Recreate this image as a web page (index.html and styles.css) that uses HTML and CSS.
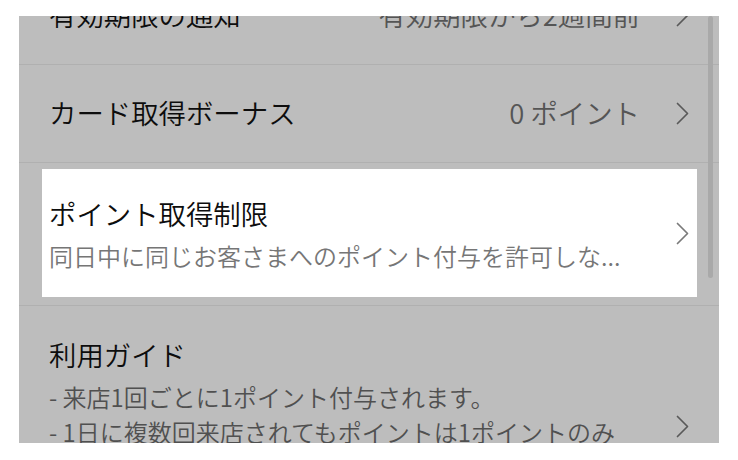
FILE: index.html
```html
<!DOCTYPE html>
<html lang="ja">
<head>
<meta charset="utf-8">
<link rel="stylesheet" href="styles.css">
</head>
<body>
<div class="screen">
  <div class="list">
    <div class="row">
      <div class="label">有効期限の通知</div>
      <div class="value">有効期限から2週間前</div>
      <svg class="chev" viewBox="0 0 13 23" width="13" height="23"><polyline points="1.5,1.5 11.5,11.5 1.5,21.5" /></svg>
    </div>
    <div class="row">
      <div class="label">カード取得ボーナス</div>
      <div class="value">0 ポイント</div>
      <svg class="chev" viewBox="0 0 13 23" width="13" height="23"><polyline points="1.5,1.5 11.5,11.5 1.5,21.5" /></svg>
    </div>
    <div class="row row-spot">
      <div class="spot">
        <div class="text">
          <div class="title">ポイント取得制限</div>
          <div class="sub">同日中に同じお客さまへのポイント付与を許可しな...</div>
        </div>
        <svg class="chev chev-light" viewBox="0 0 13 23" width="13" height="23"><polyline points="1.5,1.5 11.5,11.5 1.5,21.5" /></svg>
      </div>
    </div>
    <div class="row row-guide">
      <div class="text">
        <div class="title">利用ガイド</div>
        <div class="guide">
          <div>- 来店1回ごとに1ポイント付与されます。</div>
          <div>- 1日に複数回来店されてもポイントは1ポイントのみ</div>
          <div>&nbsp;&nbsp;付与されます。</div>
          <div>- ポイントの有効期限は最終来店日から1年です。</div>
        </div>
      </div>
      <svg class="chev" viewBox="0 0 13 23" width="13" height="23"><polyline points="1.5,1.5 11.5,11.5 1.5,21.5" /></svg>
    </div>
  </div>
  <div class="scrollbar"></div>
</div>
</body>
</html>
```

FILE: styles.css
```css
html, body {
  margin: 0;
  padding: 0;
  background: #ffffff;
}

body {
  font-family: "Noto Sans CJK JP", "Noto Sans", sans-serif;
  font-weight: 350;
  color: #111;
}

.screen {
  position: relative;
  margin: 16px 0 0 19px;
  width: 700px;
  height: 427px;
  overflow: hidden;
  background: #bdbdbd;
}

.list {
  margin-top: -49px;
}

.row {
  box-sizing: border-box;
  display: flex;
  align-items: center;
  height: 98px;
  padding: 0 30px;
  border-bottom: 1px solid #b0b0b0;
}

.label {
  flex: 1;
  font-size: 27.4px;
  line-height: 36px;
  padding-bottom: 4px;
  color: #0d0d0d;
  white-space: nowrap;
}

.value {
  font-size: 27.4px;
  line-height: 36px;
  padding-bottom: 4px;
  color: #555;
  margin-right: 36px;
  white-space: nowrap;
}

.chev {
  flex: none;
  display: block;
}

.chev polyline {
  fill: none;
  stroke: #595959;
  stroke-width: 1.7;
  stroke-linecap: round;
  stroke-linejoin: round;
}

.chev-light polyline {
  stroke: #7a7a7a;
}

.row-spot {
  height: 143px;
  padding: 6px 22px 8px 23px;
  align-items: stretch;
}

.spot {
  flex: 1;
  display: flex;
  align-items: center;
  background: #ffffff;
  padding: 0 8px 0 7px;
}

.text {
  flex: 1;
  min-width: 0;
}

.title {
  font-size: 27.4px;
  line-height: 40px;
  color: #0d0d0d;
  white-space: nowrap;
}

.sub {
  font-size: 24px;
  line-height: 35px;
  margin-top: 5px;
  color: #767676;
  white-space: nowrap;
}

.row-guide {
  height: auto;
  padding: 28px 30px 64px;
}

.guide {
  margin-top: 5px;
  font-size: 24px;
  line-height: 35px;
  color: #505050;
  white-space: nowrap;
}

.scrollbar {
  position: absolute;
  top: 0;
  right: 6px;
  width: 5px;
  height: 262px;
  border-radius: 3px;
  background: #a9a9a9;
}
```
